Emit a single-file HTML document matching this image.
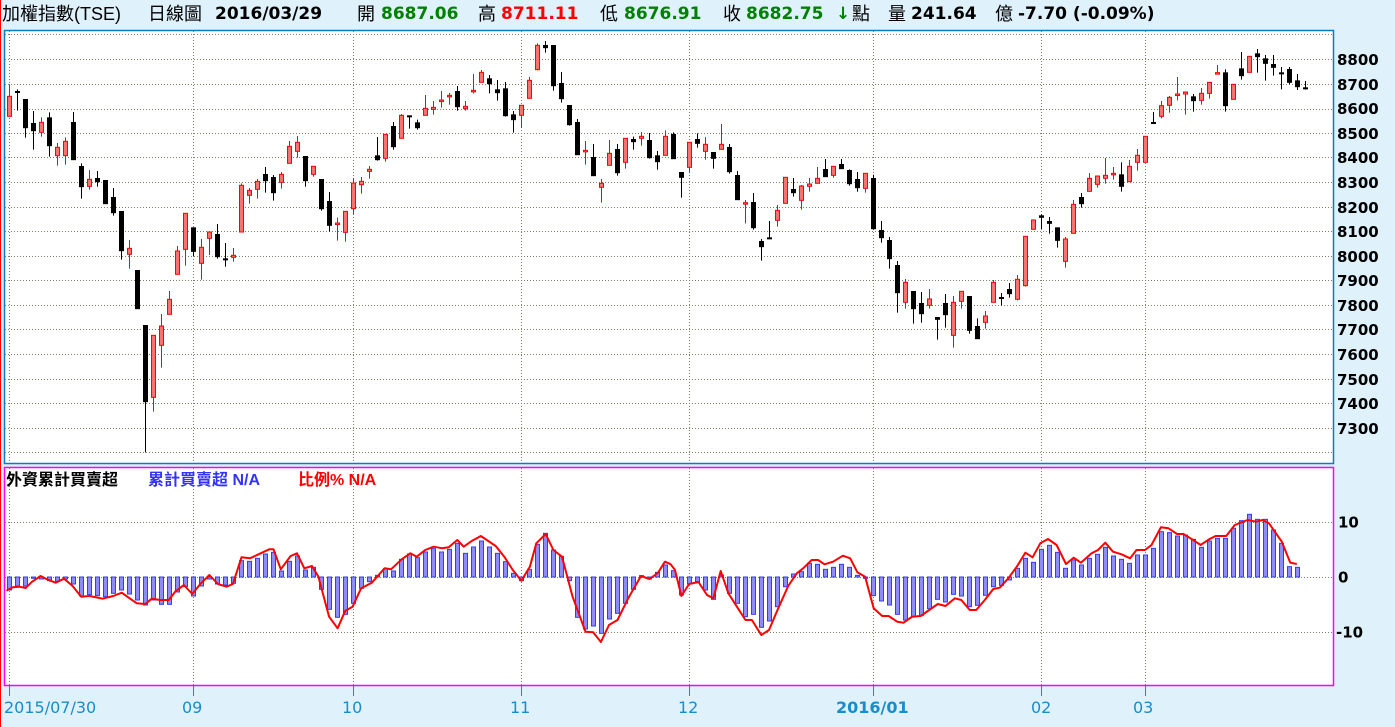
<!DOCTYPE html>
<html><head><meta charset="utf-8"><style>
html,body{margin:0;padding:0;}
body{width:1395px;height:727px;background:#dff1fb;position:relative;overflow:hidden;font-family:"Liberation Sans","Noto Sans CJK TC",sans-serif;}
.h{position:absolute;top:3px;font-size:18px;line-height:22px;white-space:nowrap;color:#000;font-weight:bold;}
.n{font-family:"DejaVu Sans","Noto Sans CJK TC",sans-serif;font-size:17px;}
.g{color:#008000;}
.r{color:#ff0000;}
svg{position:absolute;left:0;top:0;}
</style></head><body>
<div class="h" style="left:2px;font-weight:normal">加權指數(TSE)</div>
<div class="h" style="left:148px;font-weight:normal">日線圖</div>
<div class="h n" style="left:215px">2016/03/29</div>
<div class="h" style="left:357px;font-weight:normal">開</div>
<div class="h n g" style="left:381px">8687.06</div>
<div class="h" style="left:478px;font-weight:normal">高</div>
<div class="h n r" style="left:501px">8711.11</div>
<div class="h" style="left:600px;font-weight:normal">低</div>
<div class="h n g" style="left:624px">8676.91</div>
<div class="h" style="left:723px;font-weight:normal">收</div>
<div class="h n g" style="left:746px">8682.75</div>
<div class="h n g" style="left:836px">↓</div>
<div class="h" style="left:852px;font-weight:normal">點</div>
<div class="h" style="left:888px;font-weight:normal">量</div>
<div class="h n" style="left:911px">241.64</div>
<div class="h" style="left:995px;font-weight:normal">億</div>
<div class="h n" style="left:1018px">-7.70 (-0.09%)</div>
<svg id="s" width="1395" height="727" xmlns="http://www.w3.org/2000/svg"></svg>
<script>
var S=document.getElementById('s'),o='';
o+='<line x1="0.5" y1="0" x2="0.5" y2="727" stroke="#ff0000" stroke-width="1"/>';
o+='<rect x="4.5" y="30.5" width="1329" height="433" fill="#fff" stroke="#0a7cc0" stroke-width="1.5"/>';
o+='<rect x="4.5" y="467.5" width="1329" height="218" fill="#fff" stroke="#ff00ff" stroke-width="1.5"/>';
var vx=[9,193,353,521,689,873,1041,1145];
var gs='stroke="#808066" stroke-width="1" stroke-dasharray="1,2"';
vx.forEach(function(x){o+='<line x1="'+(x+.5)+'" y1="31" x2="'+(x+.5)+'" y2="463" '+gs+'/>';o+='<line x1="'+(x+.5)+'" y1="468" x2="'+(x+.5)+'" y2="685" '+gs+'/>';
o+='<line x1="'+(x+.5)+'" y1="686" x2="'+(x+.5)+'" y2="696" stroke="#1a8ccc" stroke-width="1"/>';});
var hy=[34.3,59.3,84.3,108.7,133.3,157.3,182.3,207.3,231.3,256.3,280.3,305.3,329.3,354.3,379.3,403.3,428.3,452.3];
hy.forEach(function(y){y=Math.round(y)+.5;o+='<line x1="5" y1="'+y+'" x2="1333" y2="'+y+'" '+gs+'/>';});
for(var i=0;i<16;i++){o+='<text x="1337" y="'+(hy[i+1]+5.5)+'" font-family="DejaVu Sans,sans-serif" font-weight="bold" font-size="15" fill="#000">'+(8800-i*100)+'</text>';}
[522,577,632].forEach(function(y,k){o+='<line x1="5" y1="'+(y+.5)+'" x2="1333" y2="'+(y+.5)+'" '+gs+'/>';
o+='<text x="'+(k==2?1336:(k==1?1338:1338))+'" y="'+(y+5.5)+'" font-family="DejaVu Sans,sans-serif" font-weight="bold" font-size="15" fill="#000">'+['10','0','-10'][k]+'</text>';});
var xl=[[4,'2015/07/30'],[182,'09'],[342,'10'],[510,'11'],[678,'12'],[836,'2016/01'],[1031,'02'],[1133,'03']];
xl.forEach(function(a){o+='<text x="'+a[0]+'" y="713" font-family="DejaVu Sans,sans-serif" font-size="16" fill="#1a8ccc"'+(a[1]=='2016/01'?' font-weight="bold"':'')+'>'+a[1]+'</text>';});
o+='<text x="6" y="485" font-family="Liberation Sans,Noto Sans CJK TC,sans-serif" font-weight="bold" font-size="16" fill="#000">外資累計買賣超</text>';
o+='<text x="148" y="485" font-family="Liberation Sans,Noto Sans CJK TC,sans-serif" font-weight="bold" font-size="16" fill="#3333ff">累計買賣超 N/A</text>';
o+='<text x="298" y="485" font-family="Liberation Sans,Noto Sans CJK TC,sans-serif" font-weight="bold" font-size="16" fill="#ff0000">比例% N/A</text>';
var C=[[0,[
[28,199,259,163,259,1],[52,183,187,178,242,0],[76,207,293,207,323,0],[100,279,302,243,359,0],[124,277,307,262,320,1],[148,262,347,247,380,0],[172,352,377,339,407,1],[196,334,377,322,404,1],[220,276,389,246,389,0],[244,408,470,400,506,0],[268,448,469,420,479,1],[292,444,455,423,470,0],[316,450,521,450,521,0],[340,501,548,474,557,0],[364,543,662,543,689,0],[388,655,673,630,716,1],[412,720,836,720,836,0],[436,885,1115,885,1267,0],[460,916,1102,916,1145,1],[484,888,946,852,1013,1],[508,808,853,783,853,1],[532,663,733,648,733,1],[556,550,658,550,707,1],[580,592,664,592,678,0],[604,652,700,627,749,1],[628,606,625,606,675,1],[652,612,680,582,686,0],[676,685,689,639,710,0],[700,676,682,654,695,1],[724,466,606,460,606,1],[748,481,496,474,521,1],[772,454,478,447,506,1],[796,432,452,411,488,0],[820,441,488,435,512,0],[844,433,457,426,476,1],[868,349,400,333,400,1],[892,337,364,318,383,1],[916,378,452,378,470,0],[940,409,433,409,440,1],[964,447,536,447,542,0],[988,513,586,486,605,0],[1012,579,581,563,632,1]]],
[330,[[46,544,607,544,635,1],[70,459,536,444,553,1],[94,454,464,441,491,1],[118,418,424,408,446,1],[142,376,389,321,392,0],[166,313,385,313,395,1],[190,288,350,276,359,0],[214,256,325,252,325,1],[238,256,260,256,296,0],[262,277,293,269,299,0],[286,235,256,195,256,1],[310,232,238,213,254,1],[334,210,214,183,233,1],[358,196,200,189,224,1],[382,183,230,168,242,0],[406,229,236,213,242,1],[430,181,185,132,190,1],[454,127,157,120,157,1],[478,145,161,135,190,0],[502,178,188,150,212,0],[526,175,257,156,260,0],[550,253,269,243,308,0],[574,226,256,226,294,1],[598,151,205,141,205,1],[622,46,119,40,121,1],[646,45,53,33,68,0],[670,45,167,45,182,0],[694,159,206,126,218,0],[718,225,284,225,287,0],[742,276,374,267,374,0],[766,361,364,333,404,1],[790,381,437,342,437,0],[814,460,472,447,518,1],[838,370,406,330,406,1],[862,357,428,342,437,0],[886,325,397,325,416,1],[910,327,335,320,359,0],[934,319,325,306,347,1],[958,330,383,309,386,0],[982,376,395,363,419,0],[1006,319,376,301,376,1]]],
[660,[[40,312,386,307,386,0],[64,426,442,426,503,0],[88,337,412,337,428,1],[112,327,340,310,353,0],[136,343,364,321,389,1],[160,366,385,366,416,0],[184,343,358,282,358,1],[208,351,425,342,431,0],[232,435,509,423,509,0],[256,518,521,510,580,1],[280,516,593,489,599,0],[304,633,650,627,692,0],[328,622,626,573,626,0],[352,541,571,525,590,1],[376,442,520,442,520,1],[400,477,488,444,500,0],[424,468,511,465,539,1],[448,462,469,444,485,1],[472,445,460,411,460,1],[496,417,440,387,440,0],[520,409,436,409,443,1],[544,402,416,387,416,0],[568,420,461,418,467,0],[592,447,473,426,485,0],[616,430,475,430,488,1],[640,444,596,434,599,0],[664,600,623,573,638,0],[688,630,686,621,716,0],[712,705,788,693,848,0],[736,757,817,747,836,1],[760,783,836,783,881,0],[784,819,851,786,878,0],[808,807,826,777,836,1],[832,861,868,861,929,0],[856,819,854,792,893,0],[880,817,916,798,953,1],[904,784,814,784,836,1],[928,798,901,798,911,0],[952,888,926,865,926,0],[976,858,877,843,896,1],[1000,757,817,750,817,1]]],
[990,[[34,801,805,789,827,0],[58,777,791,759,803,0],[82,748,808,735,811,1],[106,619,767,619,770,1],[130,570,598,568,598,1],[154,556,562,553,597,0],[178,573,580,561,611,0],[202,592,631,592,653,0],[226,627,694,621,713,1],[250,523,610,510,610,1],[274,501,521,489,533,0],[298,445,484,429,484,1],[322,438,463,438,473,1],[346,436,445,384,461,1],[370,430,433,411,449,1],[394,433,469,397,485,0],[418,409,455,390,455,1],[442,376,397,357,422,1],[466,319,397,319,397,1],[490,276,278,246,280,0],[514,227,259,213,265,1],[538,202,226,198,248,1],[562,192,194,141,211,1],[586,186,192,184,254,1],[610,199,212,192,245,0],[634,190,211,174,224,1],[658,157,190,157,206,1],[682,128,130,105,133,1],[706,127,227,118,245,0],[730,163,208,163,208,1],[754,115,137,66,149,0],[778,79,127,79,127,1],[802,70,80,57,128,0],[826,85,100,75,152,0],[850,102,112,75,137,0],[874,127,130,111,178,0],[898,117,157,111,163,0],[922,151,170,132,180,0],[946,172,176,153,179,0]]]];
C.forEach(function(seg){var off=seg[0];seg[1].forEach(function(c){
var x=Math.round(off+c[0]/3),t=30+c[1]/3,b=30+c[2]/3,h=30+c[3]/3,l=30+c[4]/3,col=c[5]?'#ff0000':'#000';
o+='<line x1="'+(x+.5)+'" y1="'+h+'" x2="'+(x+.5)+'" y2="'+l+'" stroke="'+col+'" stroke-width="1"/>';
var bh=Math.max(b-t,1.5);
if(c[5])o+='<rect x="'+(x-1.5)+'" y="'+t+'" width="4" height="'+bh+'" fill="#ff7070" stroke="#ff0000" stroke-width="1"/>';
else o+='<rect x="'+(x-2)+'" y="'+t+'" width="5" height="'+(bh+.5)+'" fill="#000"/>';
});});
var B=[240,228,228,205,207,212,214,207,222,258,254,257,260,250,240,252,270,285,270,283,283,246,230,258,228,207,222,225,220,152,154,145,132,127,183,154,138,180,172,238,298,322,313,280,235,215,196,176,183,148,132,143,126,116,126,118,100,130,111,93,111,130,155,190,212,178,103,70,120,139,212,322,357,348,370,327,310,280,238,197,207,187,165,
182,255,222,215,240,268,195,250,280,320,313,352,333,290,230,192,185,160,163,178,172,163,172,196,205,257,273,285,313,330,320,316,296,268,276,253,258,290,286,256,230,226,210,175,145,157,118,106,127,175,150,165,145,133,112,138,148,160,135,135,115,65,68,78,75,88,112,93,85,85,55,32,13,28,28,60,100,170,172];
B.forEach(function(v,i){var x=9+8*i-1.5,y=510+v/3,z=577;var t=Math.min(y,z),h=Math.max(Math.abs(y-z),1);
o+='<rect x="'+x+'" y="'+t+'" width="4" height="'+h+'" fill="#8c8cff" stroke="#3838ff" stroke-width="1"/>';});
var L1=[15,242,30,232,45,230,60,234,75,215,95,198,110,208,130,218,150,206,170,228,190,260,210,258,240,266,265,258,285,248,300,262,320,280,340,282,355,266,375,270,395,270,410,245,430,225,450,252,470,220,490,195,510,222,530,230,545,222,565,142,585,145,610,130,630,118,640,118,657,178,680,138,695,130,712,175,730,168,745,200,770,320,790,355,808,302,825,290,845,235,870,218,900,175,915,178,940,148,960,130,975,140,995,120,1015,110,1035,115,1050,112,1070,90,1085,110,1105,92,1125,78,1160,108,1180,140,1200,180,1220,212,1240,170,1255,100,1277,72,1295,120,1315,140,1340,260,1370,365,1388,367,1406,396,1425,345,1445,330,1470,265,1500,198,1520,207,1540,188,1555,157];
var L2=[12,155,25,163,35,180,50,258,68,222,90,216,110,255,125,265,142,183,160,250,180,290,200,330,215,330,237,375,255,360,275,300,300,228,320,190,335,175,355,150,370,150,385,163,405,155,428,137,445,145,462,187,480,200,500,295,520,318,535,318,555,335,570,338,590,320,610,318,630,300,650,282,668,288,690,265,705,270,725,300,740,300,760,270,780,237,795,233,815,205,835,170,855,128,872,142,890,100,908,87,928,105,950,162,968,143,985,158,1010,130,1025,120,1042,98,1060,125,1080,133,1100,145,1115,120,1135,120,1150,105,1172,52,1190,55,1210,72,1225,72,1245,88,1265,105,1285,88,1300,78,1325,78,1345,45,1375,30,1395,35,1410,30,1425,40,1455,95,1475,158,1490,162];
var p=[];for(var i=0;i<L1.length;i+=2)p.push((L1[i]/2.34).toFixed(1)+','+(510+L1[i+1]/3).toFixed(1));
for(var i=0;i<L2.length;i+=2)p.push((660+L2[i]/2.34).toFixed(1)+','+(510+L2[i+1]/3).toFixed(1));
o+='<polyline points="'+p.join(' ')+'" fill="none" stroke="#ff0000" stroke-width="2" stroke-linejoin="round"/>';
S.innerHTML=o;
</script>
</body></html>
